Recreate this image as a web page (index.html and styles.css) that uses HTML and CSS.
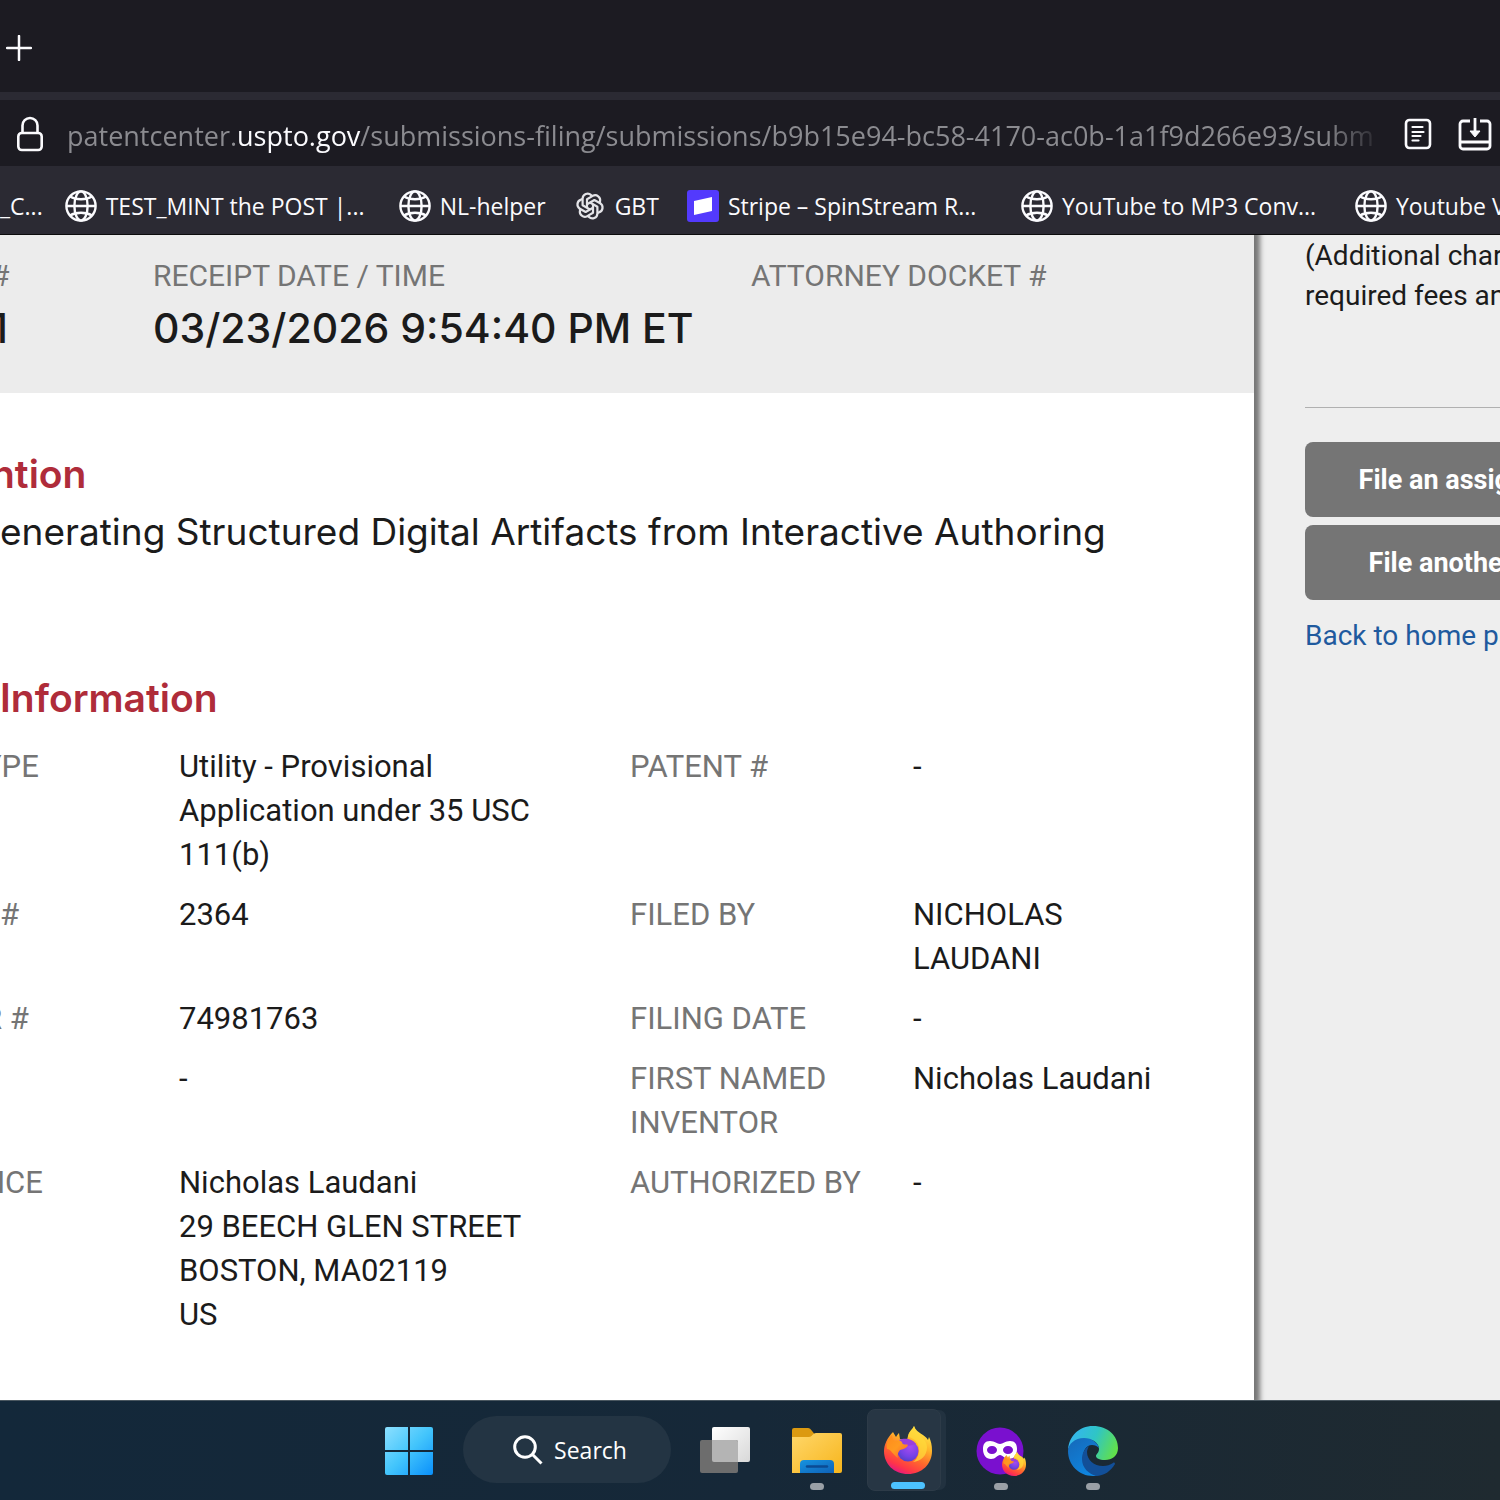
FILE: index.html
```html
<!DOCTYPE html>
<html lang="en">
<head>
    <meta charset="UTF-8">
    <meta name="viewport" content="width=device-width, initial-scale=1.0">
    <title>Patent Center</title>
    <link rel="stylesheet" href="styles.css">
</head>
<body>
    <svg class="defs" aria-hidden="true">
        <defs>
            <symbol id="globe" viewBox="0 0 32 32">
                <g fill="none" stroke="#fbfbfe" stroke-width="2.4">
                    <circle cx="16" cy="16" r="14.6"/>
                    <ellipse cx="16" cy="16" rx="6.6" ry="14.6"/>
                    <path d="M1.5 16h29M5 6.5c6 3.6 16 3.6 22 0M5 25.5c6-3.6 16-3.6 22 0"/>
                </g>
            </symbol>
            <linearGradient id="ff-body" x1="0.8" y1="0" x2="0.3" y2="1">
                <stop offset="0" stop-color="#fff44f"/>
                <stop offset="0.35" stop-color="#ffb52a"/>
                <stop offset="0.62" stop-color="#ff6a2c"/>
                <stop offset="0.85" stop-color="#ff3647"/>
                <stop offset="1" stop-color="#e31587"/>
            </linearGradient>
            <radialGradient id="ff-core" cx="0.6" cy="0.3" r="0.8">
                <stop offset="0" stop-color="#a84bf0"/>
                <stop offset="0.6" stop-color="#7542e5"/>
                <stop offset="1" stop-color="#4a3fc0"/>
            </radialGradient>
            <linearGradient id="ff-fox" x1="0" y1="0" x2="1" y2="1">
                <stop offset="0" stop-color="#ff8a1c"/>
                <stop offset="0.5" stop-color="#ff9a20"/>
                <stop offset="1" stop-color="#ff5e30"/>
            </linearGradient>
            <symbol id="firefox" viewBox="0 0 48 48">
                <path fill="url(#ff-body)" d="M30 0c-1 3-5 5-6 10l-1 4-7-1-1-6c-1 1-2 2-3 4L9 6C3 12 0 19 0 25c0 13 10 23 24 23s24-10 24-23c0-6-1-10-3-14l-1 3C41 8 33 8 30 0z"/>
                <path fill="#ffd93b" d="M30 0c-1 3-5 5-6 11 7 1 12 7 11 15-1 5-3 8-6 10 8-1 14-6 14-15 0-9-11-12-13-21z" opacity="0.75"/>
                <circle cx="24" cy="25" r="10.5" fill="url(#ff-core)"/>
                <path fill="#9a3fdc" d="M15 14c5-2 13-2 17 4l-8 2z"/>
                <path fill="url(#ff-fox)" d="M8 9c0 2 1 5 3 6 4-1 6 0 8 3 2 1 4 0 5 1-1 3-4 4-8 5-2 2-3 5-2 8-5-3-7-9-11-9-1-6 1-10 5-14z"/>
            </symbol>
            <linearGradient id="win" x1="0" y1="0" x2="1" y2="1">
                <stop offset="0" stop-color="#8ce0ff"/>
                <stop offset="0.5" stop-color="#43c5fc"/>
                <stop offset="1" stop-color="#0a90fb"/>
            </linearGradient>
            <linearGradient id="view-front" x1="0" y1="0" x2="1" y2="1">
                <stop offset="0" stop-color="#ffffff"/>
                <stop offset="1" stop-color="#d8d8d8"/>
            </linearGradient>
            <linearGradient id="folder" x1="0" y1="0" x2="1" y2="1">
                <stop offset="0" stop-color="#ffd76a"/>
                <stop offset="1" stop-color="#f7b51c"/>
            </linearGradient>
            <linearGradient id="folder-tray" x1="0" y1="0" x2="1" y2="1">
                <stop offset="0" stop-color="#1693e0"/>
                <stop offset="1" stop-color="#0f62b8"/>
            </linearGradient>
            <linearGradient id="edge-top" x1="0" y1="0.3" x2="1" y2="0.6">
                <stop offset="0" stop-color="#35b4f2"/>
                <stop offset="0.5" stop-color="#2fc5c6"/>
                <stop offset="1" stop-color="#62e04a"/>
            </linearGradient>
            <linearGradient id="edge-left" x1="0" y1="0" x2="0.6" y2="1">
                <stop offset="0" stop-color="#1668b8"/>
                <stop offset="1" stop-color="#0f86e0"/>
            </linearGradient>
        </defs>
    </svg>

    <header class="browser">
        <div class="tab-strip">
            <button class="icon-btn" aria-label="New tab">
                <svg width="26" height="26" viewBox="0 0 26 26"><path d="M13 1v24M1 13h24" stroke="#fbfbfe" stroke-width="2.5" stroke-linecap="round"/></svg>
            </button>
        </div>
        <div class="url-bar">
            <button class="icon-btn" aria-label="Site information">
                <svg width="28" height="36" viewBox="0 0 28 36" fill="none" stroke="#fbfbfe" stroke-width="2.6"><rect x="2.3" y="17" width="23.4" height="17" rx="3.5"/><path d="M6.5 17v-7.5a7.5 7.5 0 0 1 15 0V17"/></svg>
            </button>
            <div class="url" role="textbox" aria-label="Address">patentcenter.<b>uspto.gov</b>/submissions-filing/submissions/b9b15e94-bc58-4170-ac0b-1a1f9d266e93/subm</div>
            <button class="icon-btn" aria-label="Reader view">
                <svg width="28" height="32" viewBox="0 0 28 32" fill="none" stroke="#fbfbfe" stroke-width="2.6" stroke-linecap="round"><rect x="2" y="2" width="24" height="28" rx="3.5"/><path d="M8.500 9h10M8.500 14h11M8.500 18h8M8.500 22.500h6" stroke-width="2.200"/></svg>
            </button>
            <button class="icon-btn" aria-label="Save page">
                <svg width="34" height="34" viewBox="0 0 34 34" fill="none" stroke="#fbfbfe" stroke-width="2.8"><path d="M12 4H5a3 3 0 0 0-3 3v22a3 3 0 0 0 3 3h24a3 3 0 0 0 3-3V7a3 3 0 0 0-3-3h-7M2 25h30"/><path d="M17 1v15"/><path d="M12 14h10l-5 6z" fill="#fbfbfe" stroke-width="1"/></svg>
            </button>
        </div>
        <nav class="bookmarks">
            <a class="bookmark" href="#">_C...</a>
            <a class="bookmark wide" href="#"><svg width="32" height="32"><use href="#globe"/></svg><span>TEST_MINT the POST |...</span></a>
            <a class="bookmark" href="#"><svg width="32" height="32"><use href="#globe"/></svg><span>NL-helper</span></a>
            <a class="bookmark" href="#">
                <svg width="32" height="32" viewBox="0 0 32 32" fill="none" stroke="#e4e4e8" stroke-width="2.2" stroke-linejoin="round">
                    <path id="petal" d="M13 17.700V9.200l5.700-3.300a5 5 0 0 1 7.300 5.600v1.500"/>
                    <use href="#petal" transform="rotate(60 16 16)"/>
                    <use href="#petal" transform="rotate(120 16 16)"/>
                    <use href="#petal" transform="rotate(180 16 16)"/>
                    <use href="#petal" transform="rotate(240 16 16)"/>
                    <use href="#petal" transform="rotate(300 16 16)"/>
                </svg>
                <span>GBT</span>
            </a>
            <a class="bookmark wide" href="#"><svg width="32" height="32" viewBox="0 0 32 32"><rect width="32" height="32" rx="3" fill="#533afd"/><path d="M7 11l18-4v14L7 25z" fill="#fff"/></svg><span>Stripe – SpinStream R...</span></a>
            <a class="bookmark wide" href="#"><svg width="32" height="32"><use href="#globe"/></svg><span>YouTube to MP3 Conv...</span></a>
            <a class="bookmark" href="#"><svg width="32" height="32"><use href="#globe"/></svg><span>Youtube V</span></a>
        </nav>
    </header>

    <div class="page">
        <main class="receipt">
            <section class="summary">
                <div class="cut"><p class="label">#</p><p class="value">1</p></div>
                <div><p class="label">RECEIPT DATE / TIME</p><p class="value">03/23/2026 9:54:40 PM ET</p></div>
                <div><p class="label">ATTORNEY DOCKET #</p></div>
            </section>
            <section class="details">
                <h2><span class="cut">ntion</span></h2>
                <p class="title">enerating Structured Digital Artifacts from Interactive Authoring</p>
                <h2>Information</h2>
                <table>
                    <colgroup><col class="c1"><col class="c2"><col class="c3"><col></colgroup>
                    <tr>
                        <th><span class="cut">YPE</span></th>
                        <td>Utility - Provisional Application under 35 USC 111(b)</td>
                        <th>PATENT #</th>
                        <td>-</td>
                    </tr>
                    <tr>
                        <th>#</th>
                        <td>2364</td>
                        <th>FILED BY</th>
                        <td>NICHOLAS LAUDANI</td>
                    </tr>
                    <tr>
                        <th><span class="cut">R #</span></th>
                        <td>74981763</td>
                        <th>FILING DATE</th>
                        <td>-</td>
                    </tr>
                    <tr>
                        <th></th>
                        <td>-</td>
                        <th>FIRST NAMED INVENTOR</th>
                        <td>Nicholas Laudani</td>
                    </tr>
                    <tr>
                        <th><span class="cut">NCE</span></th>
                        <td>Nicholas Laudani<br>29 BEECH GLEN STREET<br>BOSTON, MA02119<br>US</td>
                        <th>AUTHORIZED BY</th>
                        <td>-</td>
                    </tr>
                </table>
            </section>
        </main>
        <aside class="sidebar">
            <div class="sidebar-inner">
                <p>(Additional charges<br>required fees and</p>
                <hr>
                <button class="action">File an assignment</button>
                <button class="action">File another form</button>
                <a href="#">Back to home page</a>
            </div>
        </aside>
    </div>

    <footer class="taskbar">
        <button class="task" aria-label="Start">
            <svg width="50" height="50" viewBox="0 0 50 50" fill="url(#win)"><path d="M3 1h21v23H1V3a2 2 0 0 1 2-2zM26 1h21a2 2 0 0 1 2 2v21H26zM1 26h23v23H3a2 2 0 0 1-2-2zM26 26h23v21a2 2 0 0 1-2 2H26z"/></svg>
        </button>
        <button class="search">
            <svg width="30" height="30" viewBox="0 0 30 30" fill="none" stroke="#fff" stroke-width="3"><circle cx="12" cy="12" r="10.3"/><path d="M19.500 19.500l9 9"/></svg>
            Search
        </button>
        <button class="task" aria-label="Task view">
            <svg width="50" height="50" viewBox="0 0 50 50"><rect x="12" y="1" width="38" height="35" rx="2" fill="url(#view-front)"/><rect y="14" width="38" height="33" rx="2" fill="#6d6d6d"/><path d="M12 14h24a2 2 0 0 1 2 2v20H14a2 2 0 0 1-2-2z" fill="#b4b4b4"/></svg>
        </button>
        <button class="task running" aria-label="File Explorer">
            <svg width="50" height="50" viewBox="0 0 50 50"><path d="M0 4a2 2 0 0 1 2-2h14c3 0 5 5 7 6v8H0z" fill="#dc9a10"/><path d="M0 11h17c3 0 4-4 7-4h24a2 2 0 0 1 2 2v36a2 2 0 0 1-2 2H0z" fill="url(#folder)"/><path d="M8 47V38a4 4 0 0 1 4-4h26a4 4 0 0 1 4 4v9z" fill="url(#folder-tray)"/><path d="M15 40.500h20" stroke="#0b4b94" stroke-width="2.4" stroke-linecap="round"/></svg>
        </button>
        <button class="task running active" aria-label="Firefox">
            <svg width="48" height="48"><use href="#firefox"/></svg>
        </button>
        <button class="task running" aria-label="Firefox Private Browsing">
            <svg width="50" height="50" viewBox="0 0 50 50"><circle cx="24" cy="25" r="23.5" fill="#7a10cf"/><path fill="#fff" fill-rule="evenodd" d="M14 15c5 0 7 3 10 3s5-3 10-3c5 0 7 3 7 8 0 6-3 10-8 10-5 0-6-4-9-4s-4 4-9 4c-5 0-8-4-8-10 0-5 2-8 7-8zm2 5c-3 0-5 2-5 4s2 4 5 4 5-2 5-4-2-4-5-4zm16 0c-3 0-5 2-5 4s2 4 5 4 5-2 5-4-2-4-5-4z"/><use href="#firefox" x="26" y="26" width="24" height="24"/></svg>
        </button>
        <button class="task running" aria-label="Edge">
            <svg width="50" height="50" viewBox="0 0 50 50">
                <path fill="url(#edge-top)" d="M0 24C1 10 11 0 25 0c15 0 25 10 25 22 0 8-6 12-13 12-6 0-9-2-9-4s3-3 3-7c0-6-6-10-13-10C8 13 1 19 0 24z"/>
                <path fill="url(#edge-left)" d="M0 25c0-7 7-13 16-13 8 0 14 5 15 10-2-2-4-3-7-3-6 0-9 6-9 12 0 9 7 16 15 18-2 1-4 1-5 1C11 50 0 39 0 25z"/>
                <path fill="#124f98" d="M21 20c-5 3-7 8-7 13 0 9 7 15 14 17 8 0 15-5 19-12 0-1-1-2-2-1-3 2-6 3-10 3-9 0-16-6-16-14 0-2 1-4 2-6z"/>
            </svg>
        </button>
    </footer>
</body>
</html>
```
FILE: styles.css
```css
* {
    box-sizing: border-box;
}
body {
    margin: 0;
    min-height: 100vh;
    display: flex;
    flex-direction: column;
    overflow-x: hidden;
    font-family: Roboto, "Liberation Sans", sans-serif;
    color: #1b1b1b;
    background: #fff;
}
p, h2 {
    margin: 0;
}
button {
    border: none;
    font-family: inherit;
    cursor: pointer;
}
svg {
    display: block;
    flex-shrink: 0;
}
.defs {
    position: absolute;
    width: 0;
    height: 0;
}

/* Browser chrome */
.browser {
    font-family: "Open Sans", "Noto Sans", sans-serif;
    background: #2b2a33;
    color: #fbfbfe;
    border-bottom: 1px solid #0c0c0d;
}
.icon-btn {
    padding: 0;
    background: none;
}
.tab-strip {
    height: 92px;
    padding: 4px 6px 0;
    display: flex;
    align-items: center;
    background: #1c1b22;
}
.url-bar {
    height: 66px;
    margin-top: 8px;
    padding: 2px 8px 0 16px;
    display: flex;
    align-items: center;
    gap: 20px;
    background: #1c1b22;
}
.url {
    flex: 1;
    min-width: 0;
    margin-left: 3px;
    padding-top: 4px;
    overflow: hidden;
    white-space: nowrap;
    font-size: 27px;
    line-height: 40px;
    color: #8b8b90;
    -webkit-mask-image: linear-gradient(to left, transparent, #000 60px);
    mask-image: linear-gradient(to left, transparent, #000 60px);
}
.url b {
    font-weight: 400;
    color: #fbfbfe;
}
.url-bar .icon-btn:last-child {
    margin-left: 6px;
}
.bookmarks {
    height: 68px;
    padding-top: 14px;
    display: flex;
    overflow: hidden;
}
.bookmark {
    flex: none;
    height: 52px;
    padding-right: 28px;
    display: flex;
    align-items: center;
    gap: 9px;
    color: #fbfbfe;
    font-size: 23px;
    white-space: nowrap;
    text-decoration: none;
}
.bookmark:first-child {
    padding-right: 22px;
}
.bookmark.wide {
    width: 334px;
    padding-right: 0;
}

/* Receipt page */
.page {
    flex: 1;
    display: flex;
    overflow: hidden;
}
.receipt {
    flex: 1;
    min-width: 0;
    background: #fff;
    box-shadow: 2px 0 5px 4px #777;
    z-index: 1;
}
.summary {
    display: grid;
    grid-template-columns: 153px 598fr 503fr;
    height: 158px;
    padding-top: 20px;
    background: #ececec;
}
.label {
    font-size: 30px;
    line-height: 41px;
    color: #757575;
}
.value {
    font-family: Inter, sans-serif;
    font-size: 41px;
    font-weight: 500;
    line-height: 64px;
}
.cut {
    margin-left: -9px;
}
th .cut {
    margin-left: -17px;
}
.details {
    padding-top: 49px;
}
.details h2 {
    font-family: Inter, sans-serif;
    font-size: 39px;
    font-weight: 600;
    line-height: 64px;
    color: #af2c3a;
}
.title {
    margin-bottom: 108px;
    font-family: Inter, sans-serif;
    font-size: 37px;
    line-height: 52px;
    white-space: nowrap;
}
table {
    width: 100%;
    margin-top: 7px;
    table-layout: fixed;
    border-collapse: collapse;
    font-size: 31px;
    line-height: 44px;
}
.c1 { width: 179px; }
.c2 { width: 451px; }
.c3 { width: 283px; }
th, td {
    padding: 8px 0;
    text-align: left;
    vertical-align: top;
    font-weight: 400;
}
th {
    padding-right: 40px;
    color: #757575;
}
td {
    padding-right: 80px;
}

/* Sidebar */
.sidebar {
    flex: 0 0 246px;
    padding: 1px 0 0 51px;
    overflow: hidden;
    background: #eee;
    font-size: 28px;
    line-height: 40px;
}
.sidebar-inner {
    width: 336px;
}
.sidebar hr {
    margin: 91px 0 34px;
    border: none;
    border-top: 1px solid #b0b0b0;
}
.action {
    width: 100%;
    height: 75px;
    margin-bottom: 8px;
    border-radius: 8px;
    background: #757575;
    color: #fff;
    font-size: 27px;
    font-weight: 700;
}
.sidebar a {
    display: block;
    margin-top: 8px;
    color: #1f5a9e;
    text-decoration: none;
}

/* Taskbar */
.taskbar {
    height: 100px;
    padding-left: 2px;
    display: flex;
    justify-content: center;
    background: linear-gradient(to right, #13283a, #162838 50%, #1f2a30);
    border-top: 1px solid #4a5760;
}
.task {
    position: relative;
    width: 92px;
    padding: 0;
    display: flex;
    align-items: center;
    justify-content: center;
    background: none;
}
.task.running::after {
    content: "";
    position: absolute;
    bottom: 10px;
    width: 14px;
    height: 7px;
    border-radius: 4px;
    background: #9aa0a6;
}
.task.active {
    width: 74px;
    height: 82px;
    margin: 8px 14px 8px 4px;
    padding-left: 8px;
    border: 1px solid #2d3b48;
    border-radius: 8px;
    background: #273644;
    box-shadow: 6px 0 0 -1px #223240;
}
.task.active::after {
    bottom: 1px;
    width: 34px;
    background: #4cc2ff;
}
.search {
    width: 208px;
    height: 67px;
    margin: 15px 8px 0;
    padding: 0 0 0 6px;
    display: flex;
    align-items: center;
    justify-content: center;
    gap: 11px;
    border-radius: 34px;
    background: #233443;
    color: #fff;
    font-family: "Open Sans", sans-serif;
    font-size: 23px;
}
```
